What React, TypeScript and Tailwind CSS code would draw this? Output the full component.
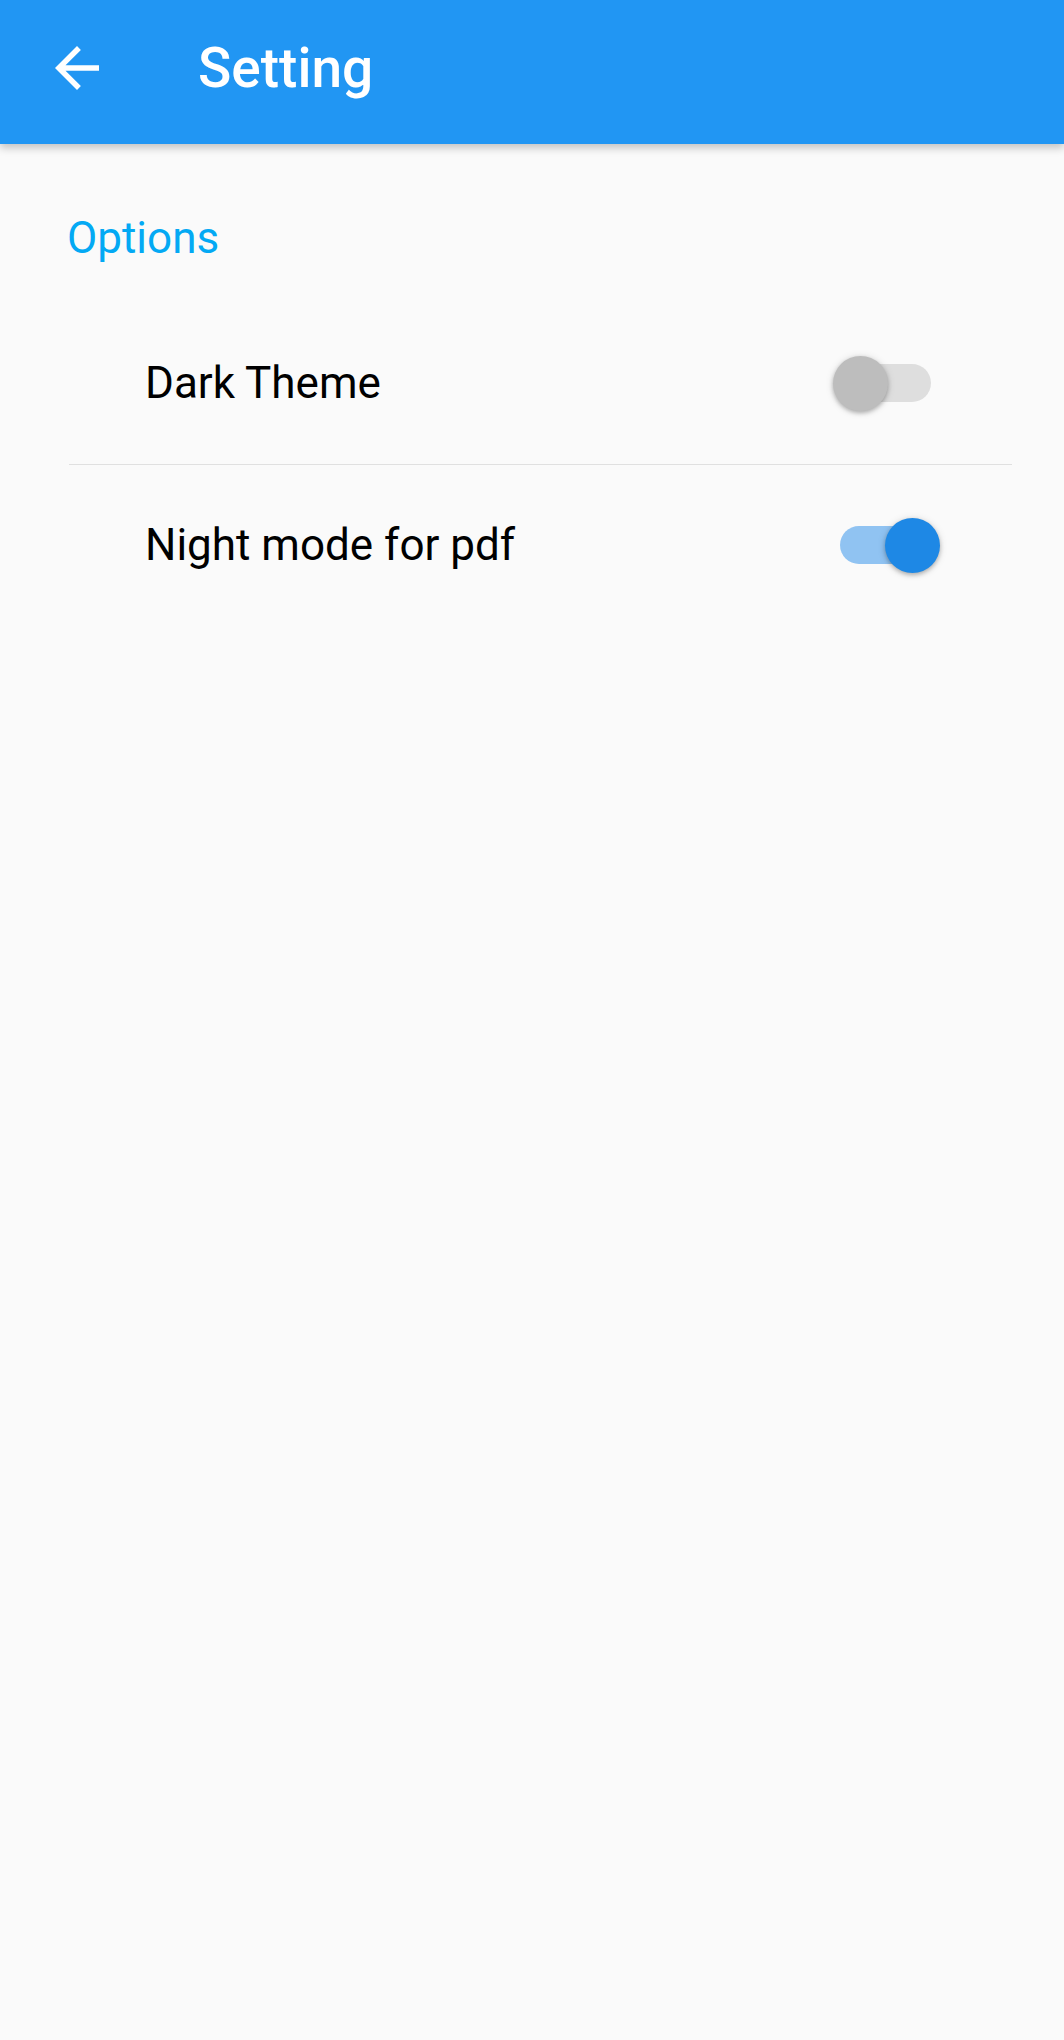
import React from "react";

function Switch({ on }: { on: boolean }) {
  return (
    <div
      className={
        "relative w-[91px] h-[38px] rounded-full " +
        (on ? "bg-[#90c3f2]" : "bg-[#dedede]")
      }
    >
      <div
        className={
          "absolute top-[-8.5px] w-[55px] h-[55px] rounded-full shadow-[0_2px_4px_rgba(0,0,0,0.25),0_1px_8px_rgba(0,0,0,0.12)] " +
          (on ? "left-[44.5px] bg-[#1e88e5]" : "left-[-7.5px] bg-[#bdbdbd]")
        }
      />
    </div>
  );
}

export default function App() {
  return (
    <div
      className="w-[1064px] h-[2040px] bg-[#fafafa] flex flex-col"
      style={{ fontFamily: "Roboto, 'Liberation Sans', sans-serif" }}
    >
      <header className="relative z-10 h-[144px] shrink-0 bg-[#2196f3] flex items-center pb-[8px] shadow-[0_4px_8px_rgba(0,0,0,0.22)]">
        <div className="ml-[44px] w-[66px] h-[66px]">
          <svg viewBox="0 0 24 24" width="66" height="66" fill="#ffffff">
            <path d="M20 11H7.83l5.59-5.59L12 4l-8 8 8 8 1.41-1.41L7.83 13H20v-2z" />
          </svg>
        </div>
        <div className="ml-[88px] text-white text-[55px] leading-[64px] font-medium">
          Setting
        </div>
      </header>

      <div className="mt-[68px] ml-[67px] text-[#03a9f4] text-[44px] leading-[52px]">
        Options
      </div>

      <div className="mt-[38px] h-[162px] flex items-center pl-[145px] pr-[133px]">
        <div className="flex-1 text-black text-[44px] leading-[52px]">Dark Theme</div>
        <Switch on={false} />
      </div>
      <div className="ml-[69px] mr-[52px] h-[1px] bg-[#e0e0e0]" />
      <div className="h-[160px] flex items-center pl-[145px] pr-[133px]">
        <div className="flex-1 text-black text-[44px] leading-[52px]">Night mode for pdf</div>
        <Switch on={true} />
      </div>
    </div>
  );
}
